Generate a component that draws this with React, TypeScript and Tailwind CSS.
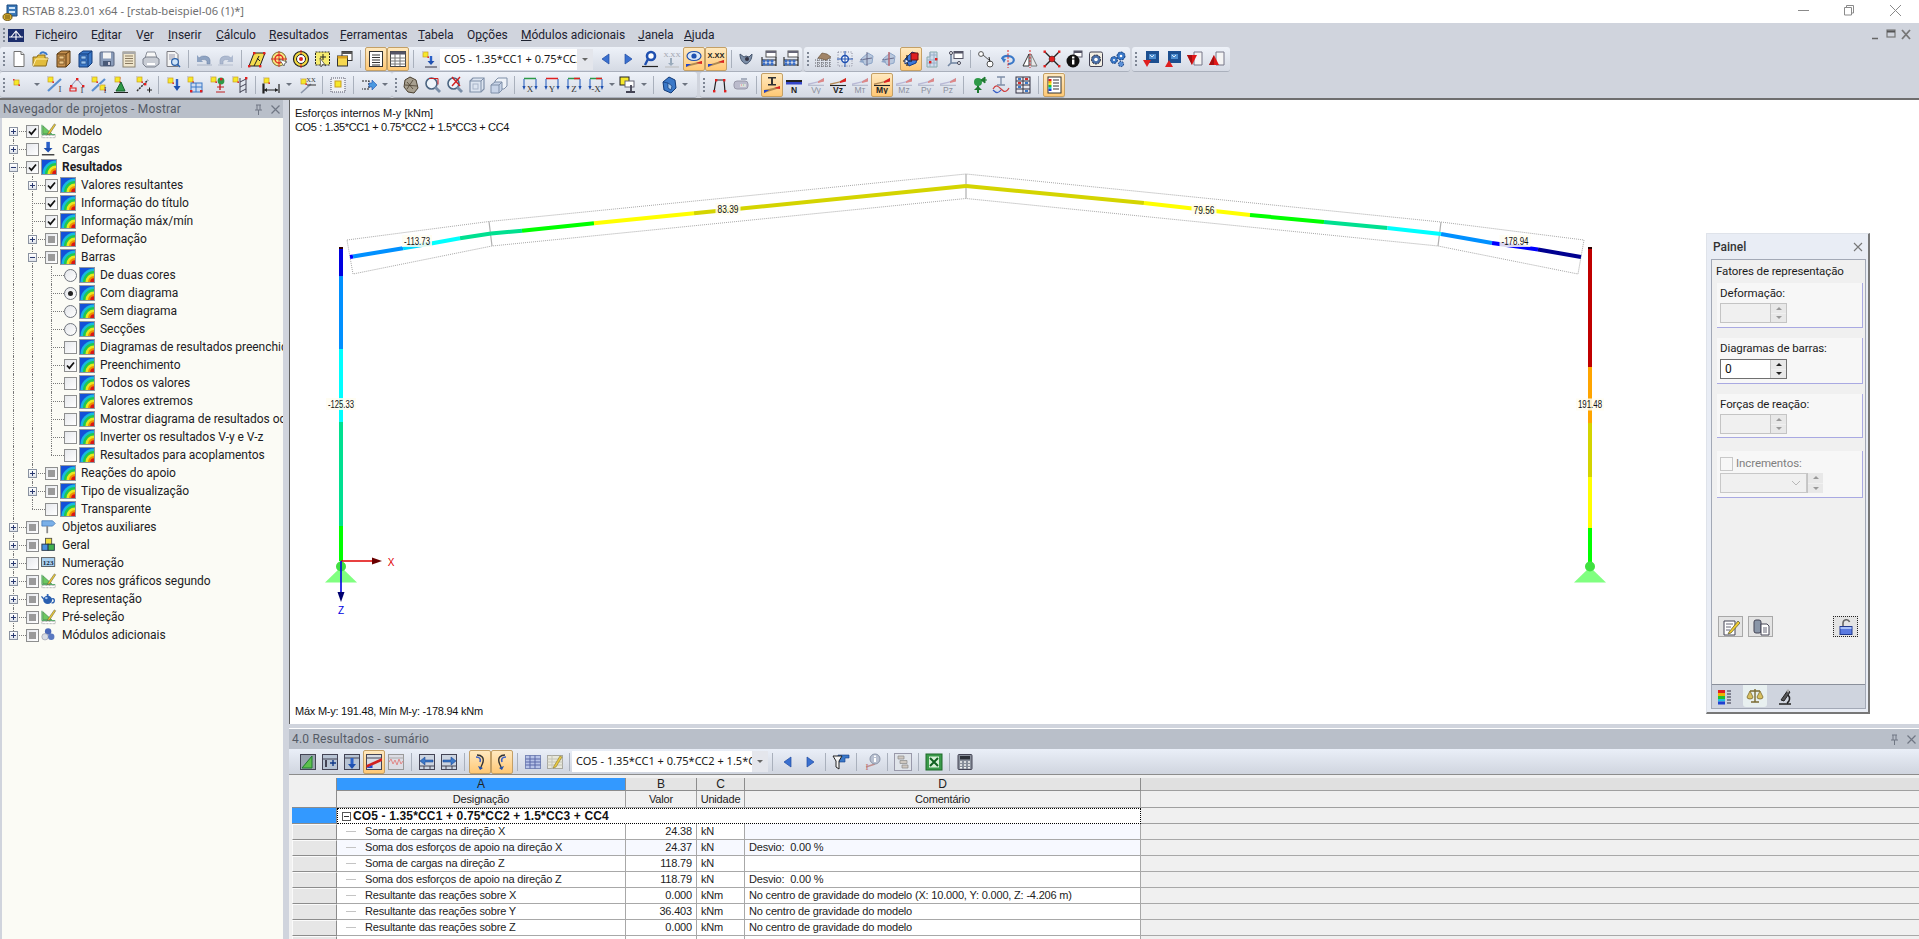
import React from "react";

const Nd = ({ x, y }: { x: number; y: number }) => (
  <g>
    <rect x={x} y={y} width="5" height="5" fill="#f6e82a" stroke="#c9a020" strokeWidth=".7" />
    <rect x={x - 1} y={y - 1} width="1.6" height="1.6" fill="#c8c8d8" />
    <rect x={x + 4.4} y={y + 4.4} width="1.6" height="1.6" fill="#d33" />
  </g>
);
const Rd = ({ x, y }: { x: number; y: number }) => <rect x={x} y={y} width="2.4" height="2.4" fill="#e02020" />;
const Tx = ({ x, y, t, c = "#333", s = 7 }: { x: number; y: number; t: string; c?: string; s?: number }) => (
  <text x={x} y={y} fontSize={s} fill={c} fontFamily="Liberation Serif, serif" textAnchor="middle">{t}</text>
);
const Wedge = ({ dim }: { dim?: boolean }) => (
  <g>
    <path d="M1 9 L17 5 V2 L10 5.5 L1 7.5z" fill={dim ? "#b9b9d6" : "#b48a55"} />
    <path d="M11 5.5L17 2v3.4L11 7z" fill={dim ? "#d88" : "#d22"} />
  </g>
);
const Res = ({ l, dim, bar }: { l: string; dim?: boolean; bar?: boolean }) => (
  <g>
    {bar ? <g><rect x="1" y="4" width="16" height="2" fill="#222" /><rect x="1" y="6" width="16" height="2.5" fill="#3546c8" /></g> : <Wedge dim={dim} />}
    {!bar && !dim && <path d="M1 9.5h16" stroke="#222" strokeWidth="1.1" />}
    {dim && <path d="M1 9.3h16" stroke="#9aa0b8" strokeWidth=".7" />}
    <text x="9" y="17" fontSize="8.5" textAnchor="middle" fontFamily="Liberation Sans, sans-serif" fontWeight={dim ? 400 : 700} fill={dim ? "#8b8f9c" : "#222"}>{l}</text>
  </g>
);
const Axis = ({ l, t, t2 }: { l: string; t: string; t2?: string }) => (
  <g>
    <path d="M3 2.5h12" stroke={t} strokeWidth="1.5" />
    {t2 && <path d="M9 2.5h6" stroke={t2} strokeWidth="1.5" />}
    <path d="M3 3v8" stroke="#3f70c4" strokeWidth="1.2" />
    <path d="M15 3v8" stroke="#3f70c4" strokeWidth="1.2" />
    <path d="M1.4 10l1.6 4 1.6-4zM13.4 10l1.6 4 1.6-4z" fill="#1f50b0" />
    <Tx x={9} y={16} t={l} c="#333" s={9} />
  </g>
);
const Abacus = () => (
  <g>
    <rect x="6" y="1" width="10" height="6" fill="#fff" stroke="#555" />
    <rect x="6" y="1" width="10" height="2" fill="#667" />
    <path d="M2 7v9M16 7v9M2 10h14M2 15h14" stroke="#222" strokeWidth="1.1" fill="none" />
    {[4, 8, 12].map((x) => <g key={x}><circle cx={x} cy="11" r="1.6" fill="#3a6ec8" /><circle cx={x} cy="14" r="1.6" fill="#3a6ec8" /></g>)}
  </g>
);
const Plane = ({ a = "#8ea6c8", b = "#b9c8de", c = "#557" }: { a?: string; b?: string; c?: string }) => (
  <g>
    <path d="M3 9l7-6 5 3-1 7-7 2z" fill={b} stroke={a} />
    <path d="M2 10l12-2M9 2v14" stroke={c} strokeWidth=".8" />
    <path d="M1 12l4-3 1 4z" fill={a} />
  </g>
);
const Page = ({ up }: { up?: boolean }) => (
  <g>
    <path d="M8 2h8v13H8z" fill="#f4f4f4" stroke="#778" />
    <path d={up ? "M6 5l5 10H1z" : "M6 15l5-10H1z"} fill="#e01818" />
    <path d={up ? "M6 5v10H1z" : "M6 15V5H1z"} fill="#a81010" />
  </g>
);
const BlueSq = ({ up }: { up?: boolean }) => (
  <g>
    <rect x="4" y="1" width="13" height="12" fill="#1c4f90" />
    <rect x="7" y="4" width="7" height="5" fill="#4f8fd0" />
    <path d="M8 5l2 2 2-2" stroke="#fff" strokeWidth=".8" fill="none" />
    <path d={up ? "M5 10l4 7H1z" : "M5 17l4-7H1z"} fill="#e02020" />
  </g>
);
const ArrowL = () => <path d="M12 4v10L5 9z" fill="#3a70d0" stroke="#1f4aa0" strokeWidth=".7" />;
const ArrowR = () => <path d="M6 4v10l7-5z" fill="#3a70d0" stroke="#1f4aa0" strokeWidth=".7" />;

const ic: Record<string, React.ReactNode> = {
  new: <g><path d="M4 1.5h7l3 3v12H4z" fill="#fff" stroke="#707070" /><path d="M11 1.5v3h3" fill="#e8e8e8" stroke="#707070" /></g>,
  open: <g><path d="M1 7h4l1-2h7v3h3l-2 8H1z" fill="#e2bc3c" stroke="#8a6a18" /><path d="M1 16l3-7h12" fill="none" stroke="#fff0b0" /><path d="M8 4a4 4 0 0 1 7 1" fill="none" stroke="#3a78c8" strokeWidth="2" /></g>,
  dr: <g><path d="M3 4l4-3h9v12l-4 4H3z" fill="#c89250" stroke="#583810" /><path d="M12 17V4H3M12 4l4-3" fill="none" stroke="#583810" /><rect x="5" y="6" width="5" height="3" fill="#f0c888" stroke="#583810" strokeWidth=".6" /><rect x="5" y="11" width="5" height="3" fill="#f0c888" stroke="#583810" strokeWidth=".6" /></g>,
  drb: <g><path d="M3 4l4-3h9v12l-4 4H3z" fill="#3a78c8" stroke="#123a78" /><path d="M12 17V4H3M12 4l4-3" fill="none" stroke="#123a78" /><rect x="5" y="6" width="5" height="3" fill="#98c4f0" stroke="#123a78" strokeWidth=".6" /><rect x="5" y="11" width="5" height="3" fill="#98c4f0" stroke="#123a78" strokeWidth=".6" /></g>,
  save: <g><rect x="2" y="2" width="14" height="14" rx="1" fill="#8a9cba" stroke="#5a6680" /><rect x="5" y="2.5" width="8" height="6" fill="#f4f4f4" /><rect x="5" y="11" width="8" height="5" fill="#4a5a78" /><rect x="10" y="12" width="2" height="3" fill="#ccd" /></g>,
  notes: <g><rect x="3" y="2" width="12" height="15" fill="#f0e6cc" stroke="#8a8270" /><path d="M5 6h8M5 8.5h8M5 11h8M5 13.5h8" stroke="#8a7a60" /><path d="M3 3h12" stroke="#aaa" strokeWidth="2" /></g>,
  print: <g><path d="M5 2h8l2 6H3z" fill="#f8f8f8" stroke="#8a8f9a" /><path d="M1 9l3-2h10l3 2v5l-4 3H4l-3-3z" fill="#c8ccd4" stroke="#7a808c" /><path d="M5 14h8" stroke="#fff" strokeWidth="2" /></g>,
  prev: <g><path d="M3 1.5h8l3 3v12H3z" fill="#f4f4f4" stroke="#7a7a80" /><path d="M5 5h6M5 7h6M5 9h4" stroke="#99a" /><circle cx="11" cy="12" r="3.4" fill="#cfe4f8" stroke="#2a60a8" strokeWidth="1.2" /><path d="M13 14l3 3" stroke="#2a60a8" strokeWidth="1.6" /></g>,
  undo: <g><path d="M4 8a6 4.5 0 0 1 11 2v4H12v-3a4 2.5 0 0 0-6-1z" fill="#8ea3c2" stroke="#7288aa" strokeWidth=".6" /><path d="M2 5v7h6z" fill="#8ea3c2" /><path d="M2 15h15" stroke="#aab4c6" /></g>,
  redo: <g><path d="M14 8a6 4.5 0 0 0-11 2v4h3v-3a4 2.5 0 0 1 6-1z" fill="#aebad0" stroke="#93a3bd" strokeWidth=".6" /><path d="M16 5v7h-6z" fill="#aebad0" /><path d="M1 15h15" stroke="#b8c0d0" /></g>,
  para: <g><path d="M6 3h11l-5 13H1z" fill="#f4dc50" stroke="#222" /><path d="M6 16l5-10M9 8l3 3" stroke="#222" /><Rd x={5} y={2} /><Rd x={0} y={15} /><Rd x={15} y={2} /><Rd x={11} y={15} /></g>,
  tg1: <g><circle cx="9" cy="9" r="7" fill="#f6e480" stroke="#7a6a30" /><circle cx="9" cy="9" r="4" fill="none" stroke="#e02020" strokeWidth="1.3" /><path d="M9 1v16M1 9h16" stroke="#e02020" strokeWidth=".9" /><path d="M9 9l5 7 1-3 2-1z" fill="#fff" stroke="#333" strokeWidth=".6" /></g>,
  tg2: <g><circle cx="9" cy="9" r="7.5" fill="#f4dc40" stroke="#222" strokeWidth="1.2" /><circle cx="9" cy="9" r="4.5" fill="#fff" stroke="#222" /><circle cx="9" cy="9" r="2" fill="#e02020" /><path d="M9 0v4M9 14v4" stroke="#e02020" /></g>,
  noteP: <g><rect x="1.5" y="2" width="14" height="13" fill="#f6ec70" stroke="#222" strokeDasharray="2 1" /><path d="M9 4v6M6 7h6" stroke="#222" /><path d="M6 8l1 9 2-3 3 2z" fill="#fff" stroke="#333" strokeWidth=".7" /></g>,
  win: <g><rect x="6" y="1.5" width="10" height="9" fill="#fff" stroke="#333" /><rect x="6" y="1.5" width="10" height="2.5" fill="#555" /><rect x="1.5" y="6" width="10" height="10" fill="#f6d850" stroke="#333" /><rect x="1.5" y="6" width="10" height="2.5" fill="#d8a020" /></g>,
  list: <g><rect x="2.5" y="1.5" width="13" height="15" fill="#fff" stroke="#333" /><path d="M5 5h8M5 7.5h8M5 10h8M5 12.5h8M5 15h8" stroke="#333" /></g>,
  tbl: <g><rect x="1.5" y="1.5" width="15" height="15" fill="#fff" stroke="#444" /><rect x="1.5" y="1.5" width="15" height="3" fill="#556" /><path d="M1.5 8h15M1.5 11h15M1.5 14h15M6 4v12M11 4v12" stroke="#777" /></g>,
  load: <g><Nd x={3} y={2} /><path d="M11 6v7" stroke="#2a60c8" strokeWidth="2.4" /><path d="M7.5 11l3.5 4 3.5-4z" fill="#1f50b0" /><path d="M5 17h12" stroke="#334" /></g>,
  aL: <ArrowL />,
  aR: <ArrowR />,
  pin: <g><circle cx="10" cy="6" r="4" fill="#fff" stroke="#1f50b0" strokeWidth="2.6" /><path d="M7 9l-3 6" stroke="#1f50b0" strokeWidth="2.4" /><path d="M1 16.5h16" stroke="#222" strokeWidth="1.2" /></g>,
  xxg: <g><text x="9" y="7" fontSize="7" textAnchor="middle" fill="#a0a4ae" fontFamily="Liberation Serif,serif">X.XX</text><path d="M8 8v7" stroke="#9ab" strokeWidth="2" /><path d="M5 13l3 3 3-3z" fill="#9ab" /><path d="M2 17h14" stroke="#bbb" /></g>,
  eye: <g><ellipse cx="9" cy="6" rx="7" ry="4.5" fill="#dce8f8" stroke="#1f50b0" strokeWidth="1.2" /><circle cx="9" cy="6" r="2.6" fill="#1f50b0" /><path d="M1 17l16-4v-2L1 15z" fill="#b08a50" /><path d="M11 13l6-2v3z" fill="#d22" /><path d="M1 17l5-3H1z" fill="#2244cc" /></g>,
  xxa: <g><text x="9" y="8" fontSize="7.5" fontWeight="700" textAnchor="middle" fill="#222" fontFamily="Liberation Sans,sans-serif">X.XX</text><path d="M1 17l16-5v-2L1 15z" fill="#b08a50" /><path d="M11 12l6-2v3z" fill="#d22" /><path d="M1 17l5-3H1z" fill="#2244cc" /></g>,
  hand: <g><path d="M2 4c0 6 3 9 6 10 3-1 6-4 6-10l-3 3-3-1-2 1z" fill="#7d8fa8" stroke="#47566e" /><circle cx="9" cy="9" r="2" fill="#334" /></g>,
  ab: <Abacus />,
  mesh: <g><path d="M1 10h16M1 13h16M1 16h16M4 8v9M8 8v9M12 8v9M16 8v9" stroke="#5a5a60" strokeDasharray="1 1" /><path d="M4 8l4-5 5 1 4 3-5 3z" fill="#a08468" stroke="#604a30" strokeWidth=".6" /></g>,
  cross: <g><rect x="2" y="2" width="14" height="14" fill="none" stroke="#889" strokeDasharray="1 1.5" /><circle cx="9" cy="9" r="3.4" fill="#fff" stroke="#1f50b0" strokeWidth="1.5" /><path d="M9 1v16M1 9h16" stroke="#1f50b0" /></g>,
  pl1: <Plane />,
  pl2: <g><Plane /><path d="M9 2v14" stroke="#d66" /></g>,
  pl3: <g><path d="M3 9l7-7 6 2-2 9-7 3z" fill="#3b78d8" stroke="#123a88" /><path d="M9 3h7v7H9z" fill="#e02020" stroke="#701010" /><path d="M1 11h9M5 5v11" stroke="#111" strokeWidth="1.1" /><path d="M3 9l4 2-4 3z" fill="#fff" stroke="#123a88" /></g>,
  grid3: <g><path d="M6 2h7v15H3V7h3z" fill="#d0dcec" stroke="#8aa" /><path d="M3 10h10M3 13h10M6 2v15M10 2v15M6 5h7" stroke="#9ab0c8" /><Rd x={5} y={11} /><Rd x={11} y={8} /></g>,
  lwin: <g><rect x="8" y="1.5" width="9" height="7" fill="#fff" stroke="#556" /><rect x="8" y="1.5" width="9" height="2" fill="#556" /><path d="M5 3v10l-3 3" stroke="#7488a4" strokeWidth="1.6" fill="none" /><path d="M5 13h7" stroke="#7488a4" strokeWidth="1.6" /><circle cx="5" cy="3" r="1.5" fill="#fff" stroke="#445" /><circle cx="13" cy="13" r="1.5" fill="#fff" stroke="#445" /></g>,
  rings: <g><circle cx="4" cy="4" r="2.4" fill="#fff" stroke="#555" /><circle cx="13" cy="14" r="3" fill="#fff" stroke="#555" /><path d="M6 5l6 5" stroke="#555" /><path d="M12 7l1 5" stroke="#222" /></g>,
  rot: <g><path d="M3 9a6 4 0 1 1 6 5" fill="none" stroke="#3a78c8" strokeWidth="2.2" /><path d="M2 8l5 1-2 4z" fill="#3a78c8" /><path d="M9 0v18" stroke="#e02020" strokeDasharray="2 1.4" /></g>,
  mir: <g><path d="M8 4L2 16h6z" fill="#fff" stroke="#333" /><path d="M10 4l6 12h-6z" fill="#e8e8e8" stroke="#777" /><path d="M9 0v18" stroke="#e02020" strokeDasharray="2 1.4" /></g>,
  xn: <g><path d="M2 2l14 14M16 2L2 16" stroke="#222" strokeWidth="1.4" /><Rd x={0.5} y={0.5} /><Rd x={15} y={0.5} /><Rd x={0.5} y={15} /><Rd x={15} y={15} /><circle cx="9" cy="9" r="3" fill="#e02020" stroke="#222" strokeWidth=".5" /></g>,
  inf: <g><rect x="9" y="1" width="8" height="6" fill="#fff" stroke="#556" /><rect x="9" y="1" width="8" height="2" fill="#556" /><circle cx="8" cy="11" r="6.5" fill="#111" /><rect x="7" y="9.5" width="2.4" height="5" fill="#fff" /><rect x="7" y="6.5" width="2.4" height="2" fill="#fff" /></g>,
  gear: <g><rect x="2.5" y="2" width="13" height="14.5" rx="1.5" fill="#f4f0e4" stroke="#445" /><circle cx="9" cy="9.5" r="4.5" fill="#4a70a8" stroke="#223" strokeDasharray="2 1" /><circle cx="9" cy="9.5" r="1.8" fill="#fff" /></g>,
  gears: <g><circle cx="12" cy="6" r="4" fill="#3a78c8" stroke="#123a78" strokeDasharray="2 1" /><circle cx="12" cy="6" r="1.3" fill="#fff" /><circle cx="5" cy="10" r="3.4" fill="#3a78c8" stroke="#123a78" strokeDasharray="2 1" /><circle cx="5" cy="10" r="1" fill="#fff" /><circle cx="12" cy="14" r="2.6" fill="#5a90d8" stroke="#123a78" strokeDasharray="1.6 1" /></g>,
  bd: <BlueSq />,
  bu: <BlueSq up />,
  pd: <Page />,
  pu: <Page up />,
  n1: <g><Nd x={4} y={4} /><rect x="3" y="3" width="1.5" height="1.5" fill="#d33" /></g>,
  t1: <g><path d="M2 15L15 3" stroke="#5a90d0" strokeWidth="2.2" /><Nd x={2} y={1} /><Tx x={14} y={16} t="I" s={9} c="#445" /></g>,
  t2: <g><path d="M3 10l6-7 6 7" stroke="#88a" fill="none" /><Rd x={2} y={9} /><Rd x={8} y={2} /><Rd x={14} y={9} /><path d="M2 15h6v-3H2z" fill="none" stroke="#e02020" strokeWidth="1.2" /><Tx x={14} y={17} t="I" s={9} c="#445" /></g>,
  t3: <g><path d="M2 15L15 3" stroke="#5a90d0" strokeWidth="2.2" /><Nd x={2} y={1} /><Nd x={10} y={9} /><Tx x={15} y={17} t="I" s={8} c="#445" /></g>,
  t4: <g><Rd x={6} y={1} /><Nd x={3} y={1} /><path d="M9 6l4 9H4z" fill="#2e9a48" stroke="#17602c" /><path d="M2 16.5h14" stroke="#222" /></g>,
  t5: <g><Nd x={3} y={1} /><path d="M3 15L14 4" stroke="#333" strokeDasharray="2 1" strokeWidth="1.5" /><Rd x={10} y={7} /><path d="M13 14h5M15.5 11.5v5" stroke="#222" /></g>,
  t6: <g><Nd x={3} y={2} /><path d="M12 3v9" stroke="#2a60c8" strokeWidth="2.4" /><path d="M8.5 10l3.5 5 3.5-5z" fill="#1f50b0" /></g>,
  t7: <g><Nd x={1} y={1} /><rect x="4" y="7" width="11" height="9" fill="#cfdcf0" stroke="#3a78c8" /><path d="M4 11h11M9 7v9" stroke="#3a78c8" /><Rd x={3} y={14} /><Rd x={13} y={14} /></g>,
  t8: <g><Nd x={2} y={1} /><circle cx="12" cy="5" r="3.4" fill="#2e9a48" /><Rd x={11} y={2} /><path d="M11 8v6" stroke="#c02020" strokeWidth="1.4" /><path d="M8 11h7M7 16h9" stroke="#c02020" /></g>,
  t9: <g><Nd x={2} y={1} /><path d="M9 2v15M15 2v15M9 6l6-3M9 11l6-3M9 16l6-3" stroke="#445" /><Rd x={14} y={1} /></g>,
  d1: <g><Nd x={2} y={2} /><path d="M1 8h1v9H1zM17 8v9M2 14h14" stroke="#222" strokeWidth="1.2" /><path d="M2 14l3-2v4zM16 14l-3-2v4z" fill="#222" /></g>,
  d2: <g><Nd x={3} y={3} /><path d="M3 17L13 8" stroke="#8a94a8" strokeWidth="1.6" /><text x="13" y="6" fontSize="6.5" textAnchor="middle" fill="#333" fontFamily="Liberation Serif,serif">XX</text><path d="M9 9h9" stroke="#333" /></g>,
  dot: <g><rect x="2" y="2" width="14" height="14" fill="#eef0f4" stroke="#556" strokeDasharray="1 1" /><rect x="6" y="5" width="6" height="6" fill="#f6e82a" stroke="#c9a020" /></g>,
  fr: <g><path d="M2 5h7v8H2" fill="none" stroke="#222" strokeDasharray="2 1" strokeWidth="1.2" /><path d="M9 7h3v-3l5 5-5 5v-3H9z" fill="#4a98e0" stroke="#1f50b0" strokeWidth=".6" /></g>,
  mh: <g><path d="M3 4l5-3 6 3 2 8-4 5-6-1-4-5z" fill="#a8a090" stroke="#4a4030" /><path d="M5 6l6 7M11 4l-6 9M3 9l12 1" stroke="#4a4030" strokeWidth=".8" /></g>,
  m1: <g><circle cx="7.5" cy="7.5" r="5.5" fill="#eef4fa" stroke="#4a6480" strokeWidth="1.6" /><path d="M11 11l5 5" stroke="#7a8ea8" strokeWidth="2.8" /><path d="M5 2.5h9v6" fill="none" stroke="#d02020" /></g>,
  m2: <g><circle cx="7.5" cy="7.5" r="5.5" fill="#eef4fa" stroke="#4a6480" strokeWidth="1.6" /><path d="M11 11l5 5" stroke="#7a8ea8" strokeWidth="2.8" /><path d="M6 1l8 9M14 1l-8 9" stroke="#d02020" strokeWidth="1.4" /></g>,
  c1: <g><path d="M5 2h11v11l-3 3H2V5z" fill="#dce4f0" stroke="#7f8fa8" strokeWidth="1.2" /><path d="M2 5h11v11M13 5l3-3" fill="none" stroke="#7f8fa8" /><rect x="5" y="8" width="5" height="5" fill="none" stroke="#a8b4c8" /></g>,
  c2: <g><path d="M8 2h9v8l-3 3H5V5z" fill="#eef2f8" stroke="#7f8fa8" /><path d="M1 9l4-3h7v8l-3 3H1z" fill="#c8d4e8" stroke="#7f8fa8" /><path d="M1 9h8v8M9 9l3-3" fill="none" stroke="#7f8fa8" /></g>,
  ax: <Axis l="X" t="#2e9a48" />,
  ay: <Axis l="Y" t="#e02020" />,
  az: <Axis l="Z" t="#2e9a48" t2="#e02020" />,
  axn: <Axis l="-X" t="#2e9a48" t2="#e02020" />,
  sc: <g><rect x="1" y="1" width="9" height="8" fill="#f6e82a" stroke="#222" /><rect x="6" y="5" width="9" height="6" fill="#fff" stroke="#667" /><path d="M7 16h9M12 9v7" stroke="#445" strokeWidth="1.8" /></g>,
  shp: <g><path d="M3 6l6-5 6 3 1 8-5 5-7-3z" fill="#3a78c8" stroke="#123a78" /><path d="M8 7l4 3-1 4-3-2zM3 6l5 1" fill="#a8ccf0" stroke="#123a78" strokeWidth=".7" /></g>,
  pi: <g><path d="M4 16L6 4h8l1 12" fill="none" stroke="#222" strokeWidth="1.2" /><Rd x={3} y={14} /><Rd x={14} y={14} /><Rd x={13} y={3} /><Rd x={5} y={3} /></g>,
  pill: <g><rect x="2" y="5" width="14" height="8" rx="3" fill="#bbc" stroke="#99a" /><rect x="8" y="8" width="6" height="3" fill="#ddd" /><path d="M9 3h6" stroke="#a8b0c0" strokeWidth="2" /><path d="M9 9h1" stroke="#e88" /><path d="M11 9h1" stroke="#8c8" /></g>,
  beam: <g><path d="M5 1h8v1.5h-3V8h3v1.5H5V8h3V2.5H5z" fill="#333" /><path d="M1 17l16-5v-1.5L1 14z" fill="#b08a50" /><path d="M11 12l6-2v3z" fill="#d22" /><path d="M1 17l5-3H1z" fill="#2244cc" /></g>,
  N: <Res l="N" bar />,
  Vy: <Res l="Vy" dim />,
  Vz: <Res l="Vz" />,
  Mt: <Res l="Mт" dim />,
  My: <Res l="My" />,
  Mz: <Res l="Mz" dim />,
  Py: <Res l="Py" dim />,
  Pz: <Res l="Pz" dim />,
  up: <g><path d="M8 5v12" stroke="#1e7a30" strokeWidth="2" /><circle cx="8" cy="6" r="4" fill="#2e9a48" /><path d="M4 14l4-4 4 4z" fill="#1e7a30" /><path d="M17 4h-4M11 4l4-3v6z" fill="#1e7a30" stroke="#1e7a30" /></g>,
  sin: <g><path d="M5 1h8M5 9h8M9 1v8" stroke="#7f8fa8" strokeWidth="1.3" /><path d="M1 13c3-5 5-3 8 0s5 4 8-1" fill="none" stroke="#d04040" strokeWidth="1.2" /><path d="M1 14c3 3 5 4 8 0" fill="none" stroke="#3a60c8" strokeWidth="1.2" /></g>,
  rows: <g><rect x="2" y="1" width="14" height="16" fill="#e8e8ee" stroke="#334" /><path d="M2 5h14M2 9h14M2 13h14M9 1v16" stroke="#334" /><path d="M4 3h3M11 7h3M4 11h3M11 15h3" stroke="#3a78c8" strokeWidth="2" /><path d="M11 3h3M4 7h3" stroke="#d03030" strokeWidth="2" /></g>,
  legend: <g><rect x="3" y="1" width="13" height="16" fill="#fff" stroke="#333" /><rect x="3.5" y="3" width="3" height="2" fill="#e02020" /><rect x="3.5" y="5" width="3" height="2" fill="#f0b000" /><rect x="3.5" y="7" width="3" height="2" fill="#f6e82a" /><rect x="3.5" y="9" width="3" height="2" fill="#20c030" /><rect x="3.5" y="11" width="3" height="2" fill="#20c0e0" /><rect x="3.5" y="13" width="3" height="2" fill="#2040d0" /><path d="M8 4h6M8 7h6M8 10h6M8 13h6" stroke="#333" /></g>,
  rTri: <g><rect x="1.5" y="1.5" width="15" height="15" fill="#9aa4b0" stroke="#445" /><path d="M3 15L13 3v12z" fill="#5cc04c" stroke="#1e7a30" /></g>,
  rPlus: <g><rect x="1.5" y="1.5" width="15" height="15" fill="#b8c4d4" stroke="#445" /><path d="M1.5 6h15" stroke="#445" /><path d="M12 7v6M9 10h6" stroke="#123a88" strokeWidth="1.4" /><path d="M5 7v7" stroke="#445" strokeWidth="2" /></g>,
  rDown: <g><rect x="1.5" y="1.5" width="15" height="15" fill="#b8c4d4" stroke="#445" /><path d="M1.5 5h15" stroke="#445" /><path d="M9 5v7" stroke="#2a60c8" strokeWidth="3" /><path d="M5 11l4 5 4-5z" fill="#1f50b0" /></g>,
  rW: <g><rect x="1.5" y="1.5" width="15" height="15" fill="#d8dce4" stroke="#445" /><path d="M1.5 5h15" stroke="#445" /><path d="M1.5 15L17 8v-3L1.5 12z" fill="#d02020" /><path d="M1.5 15l6-3v3z" fill="#2244cc" /></g>,
  rWave: <g><rect x="1.5" y="1.5" width="15" height="15" fill="#dcdce4" stroke="#999" /><path d="M2 9l2-3 2 5 2-4 2 5 2-6 2 5 2-3" fill="none" stroke="#e08888" /><path d="M1.5 5h15" stroke="#aaa" /></g>,
  rL: <g><rect x="1.5" y="1.5" width="15" height="15" fill="#ccd4e0" stroke="#445" /><path d="M1.5 13h15M6 13v4M12 13v4" stroke="#445" /><path d="M15 7H7V4L2 8l5 4V9h8z" fill="#3a78c8" stroke="#123a88" strokeWidth=".5" /></g>,
  rR: <g><rect x="1.5" y="1.5" width="15" height="15" fill="#ccd4e0" stroke="#445" /><path d="M1.5 13h15M6 13v4M12 13v4" stroke="#445" /><path d="M3 7h8V4l5 4-5 4V9H3z" fill="#3a78c8" stroke="#123a88" strokeWidth=".5" /></g>,
  cvL: <g><path d="M6 2c5 0 7 3 6 7s-3 5-2 7" fill="none" stroke="#333" strokeWidth="1.4" /><path d="M5 4c4 0 5 2 4 5" fill="none" stroke="#3a60c8" strokeWidth="1.6" /><path d="M7 13l2 4 3-2z" fill="#1f50b0" /></g>,
  cvR: <g><path d="M12 2c-5 0-7 3-6 7s3 5 2 7" fill="none" stroke="#333" strokeWidth="1.4" /><path d="M13 4c-4 0-5 2-4 5" fill="none" stroke="#3a60c8" strokeWidth="1.6" /><path d="M11 13l-2 4-3-2z" fill="#1f50b0" /></g>,
  tb1: <g><rect x="1.5" y="2.5" width="15" height="13" fill="#b8c4e8" stroke="#7a88b8" /><path d="M1.5 6h15M1.5 9h15M1.5 12h15M6 2.5v13M11 2.5v13" stroke="#5a68a8" /></g>,
  tb2: <g><rect x="1.5" y="2.5" width="15" height="13" fill="#e8e8dc" stroke="#a8a8a0" /><path d="M1.5 6h15M1.5 9h15M1.5 12h15M6 2.5v13" stroke="#c4c4b8" /><path d="M8 13L14 3l2 1-6 10-3 1z" fill="#e8c840" stroke="#8a7a30" strokeWidth=".6" /></g>,
  fil: <g><path d="M6 2h11v3h-4v4H6z" fill="#3a78c8" stroke="#123a88" strokeWidth=".6" /><path d="M1 3h9L7 8v8L4 14V8z" fill="#f4f4f4" stroke="#222" /></g>,
  fi: <g><path d="M3 14l9-3" stroke="#c09090" strokeWidth="1.5" /><Tx x={4} y={17} t="I" s={9} c="#c07070" /><circle cx="12" cy="6" r="5" fill="#b8c0d0" stroke="#8a94a8" /><rect x="11" y="5" width="2" height="4" fill="#fff" /><rect x="11" y="2.5" width="2" height="1.5" fill="#fff" /></g>,
  tree: <g><rect x="0.5" y="0.5" width="17" height="17" fill="#e0e4ea" stroke="#99a" /><path d="M4 3h6v3H4zM6 7.5h7v3H6zM8 12h6v3H8z" fill="#cfc8c0" stroke="#8a8a8a" strokeWidth=".7" /></g>,
  xl: <g><rect x="1" y="1" width="16" height="16" fill="#3a9a4a" stroke="#1e6a2a" /><rect x="4" y="3.5" width="10" height="11" fill="#d8f0d8" /><path d="M5 5l8 8M13 5l-8 8" stroke="#106020" strokeWidth="2" /></g>,
  calc: <g><rect x="2" y="1.5" width="14" height="15" rx="1" fill="#888e9a" stroke="#445" /><rect x="4" y="3" width="10" height="3.4" fill="#2b2f38" /><path d="M4 9h2M8 9h2M12 9h2M4 12h2M8 12h2M12 12h2M4 14.8h2M8 14.8h2M12 14.8h2" stroke="#f4f4f4" strokeWidth="1.6" /></g>,
  ed: <g><path d="M2 3h11v14H2z" fill="#fff" stroke="#445" /><path d="M4 6h7M4 9h5M4 12h4" stroke="#667" /><path d="M7 14l9-11 2 2-9 10-3 1z" fill="#f0cc30" stroke="#553" strokeWidth=".7" /></g>,
  cp: <g><rect x="2" y="2" width="7" height="13" rx="2" fill="#8a96a8" stroke="#445" /><path d="M9 6h6l2 2v9H9z" fill="#fff" stroke="#445" /><path d="M11 10h4M11 12h4M11 14h4" stroke="#667" /></g>,
  lk: <g><path d="M6 9V5a3.4 3.4 0 0 1 6.6-1" fill="none" stroke="#666" strokeWidth="1.6" /><rect x="3" y="8.5" width="12" height="8" fill="#5a7ae0" stroke="#223a90" /><rect x="3.5" y="9" width="11" height="2" fill="#a8c0f8" /></g>,
  tbars: <g><rect x="1" y="2" width="7" height="3" fill="#e02020" /><rect x="1" y="5" width="7" height="3" fill="#f0b000" /><rect x="1" y="8" width="7" height="3" fill="#20c030" /><rect x="1" y="11" width="7" height="2.5" fill="#20c0e0" /><rect x="1" y="13.5" width="7" height="3" fill="#2040d0" /><path d="M10 3h4M10 6h4M10 9h4M10 12h4M10 15h4" stroke="#667" strokeWidth="1.6" /></g>,
  scale: <g><path d="M9 2v13M4 4h10M5 15h8" stroke="#7a6a30" strokeWidth="1.4" /><path d="M1 10l3-6 3 6a3 2 0 0 1-6 0zM11 10l3-6 3 6a3 2 0 0 1-6 0z" fill="#d8c060" stroke="#7a6a30" strokeWidth=".8" /></g>,
  micro: <g><path d="M5 12l7-10 2 2-6 9z" fill="#555" stroke="#222" /><path d="M3 16h12M12 7a5 5 0 0 1-1 8" fill="none" stroke="#222" strokeWidth="1.6" /><circle cx="12" cy="3" r="1.4" fill="#aaa" /></g>,
  ruler: <g><path d="M1 13V2M1 13h15" stroke="#2e9a48" strokeWidth=".9" /><path d="M2 12V3l10 9z" fill="#6cc860" stroke="#2e8038" strokeWidth=".7" /><path d="M8 11L15 1l1.5 1L10 12l-3 1z" fill="#f0cc30" stroke="#554" strokeWidth=".6" /><rect x="1" y="14" width="15" height="2.5" fill="#fff" stroke="#888" strokeWidth=".8" strokeDasharray="1 .6" /></g>,
  down: <g><path d="M8 1v8" stroke="#2a60c8" strokeWidth="4" /><path d="M3 8l5 5 5-5z" fill="#1f50b0" /><path d="M1 15.5h14" stroke="#222" strokeWidth="1.4" /></g>,
  sign: <g><path d="M1 2h12l3 3-3 3H1z" fill="#7ab0e8" stroke="#3a70b0" strokeWidth=".8" /><path d="M7 8v8" stroke="#8a8a8a" strokeWidth="2" /></g>,
  cubes: <g><rect x="5" y="1.5" width="7" height="7" fill="#f0dc40" stroke="#554" /><rect x="1" y="8" width="7" height="7" fill="#4a90e0" stroke="#234" /><rect x="8" y="8" width="7" height="7" fill="#40b050" stroke="#234" /></g>,
  num: <g><rect x="0.5" y="3" width="15" height="10" fill="#a8d0f0" stroke="#333" strokeWidth=".8" /><text x="8" y="11" fontSize="8" textAnchor="middle" fontWeight="700" fill="#123" fontFamily="Liberation Serif,serif">123</text></g>,
  pot: <g><ellipse cx="7.5" cy="10" rx="5" ry="4.6" fill="#2a5fb0" /><circle cx="7.5" cy="4.6" r="1.2" fill="#2a5fb0" /><path d="M12 9c2-1 3 0 3 2s-2 3-3 2M3 9L0.5 6" fill="none" stroke="#2a5fb0" strokeWidth="1.5" /><ellipse cx="6" cy="8" rx="1.6" ry="1.2" fill="#a8c8f0" /></g>,
  mods: <g><circle cx="8" cy="5" r="3.6" fill="#4a68b8" /><circle cx="4.5" cy="11" r="3.6" fill="#d8dce4" stroke="#889" strokeWidth=".6" /><circle cx="11.5" cy="11" r="3.6" fill="#5a78c0" /></g>,
};

const Ic = ({ n, s = 18 }: { n: string; s?: number }) => (
  <svg width={s} height={s} viewBox="0 0 18 18" className="block shrink-0">{ic[n]}</svg>
);

type It = string;
const Grip = () => (
  <div className="w-[8px] h-full flex flex-col items-center justify-center gap-[2px] shrink-0">
    {[0, 1, 2, 3].map((i) => <div key={i} className="w-[2px] h-[2px] bg-[#7e8694]" />)}
  </div>
);
const Sep = () => (
  <div className="w-[9px] h-full flex items-center justify-center shrink-0">
    <div className="w-[1px] h-[18px] bg-[#a9b0bc]" />
  </div>
);
const Dd = ({ w }: { w: string }) => (
  <div className={`${w} h-full flex items-center justify-center shrink-0`}>
    <div className="w-0 h-0 border-l-[3px] border-r-[3px] border-t-[3px] border-l-transparent border-r-transparent border-t-[#6d7480]" />
  </div>
);
const Btn = ({ n, on }: { n: string; on?: boolean }) => (
  <div className={on
    ? "w-[22px] h-[24px] shrink-0 flex items-center justify-center rounded-[2px] border border-[#c4a066] bg-gradient-to-b from-[#ffe9bf] to-[#ffc874]"
    : "w-[22px] h-[24px] shrink-0 flex items-center justify-center"}>
    <Ic n={n} />
  </div>
);
const Items = ({ list }: { list: It[] }) => (
  <>
    {list.map((k, i) => {
      if (k === "|") return <Sep key={i} />;
      if (k === "v") return <Dd key={i} w="w-[14px]" />;
      if (k === "w") return <Dd key={i} w="w-[10px]" />;
      if (k === ":") return <Grip key={i} />;
      const on = k.startsWith("*");
      return <Btn key={i} n={on ? k.slice(1) : k} on={on} />;
    })}
  </>
);
const Combo = ({ w }: { w: string }) => (
  <div className={`${w} h-[21px] bg-white flex items-center pl-[4px] overflow-hidden shrink-0`}>
    <span className="flex-1 min-w-0 overflow-hidden whitespace-nowrap text-[11px] text-[#1a1a1a]" style={{ fontFamily: "'Noto Sans', sans-serif" }}>CO5 - 1.35*CC1 + 0.75*CC2 + 1.5*CC3 + CC4</span>
    <div className="w-[16px] h-full bg-[#e4e6ec] flex items-center justify-center shrink-0">
      <div className="w-0 h-0 border-l-[3px] border-r-[3px] border-t-[3px] border-l-transparent border-r-transparent border-t-[#666]" />
    </div>
  </div>
);
const Seg = ({ w, children }: { w: string; children: React.ReactNode }) => (
  <div className={`${w} h-full flex items-center rounded-[3px] bg-gradient-to-b from-[#eef2f9] to-[#d5dae4] border-b border-[#aab0bc] shrink-0`}>{children}</div>
);

const menu: [string, string, string, string][] = [
  ["Fic", "h", "eiro", "w-[56px]"],
  ["E", "d", "itar", "w-[45px]"],
  ["V", "e", "r", "w-[32px]"],
  ["", "I", "nserir", "w-[48px]"],
  ["", "C", "álculo", "w-[53px]"],
  ["", "R", "esultados", "w-[71px]"],
  ["", "F", "erramentas", "w-[78px]"],
  ["", "T", "abela", "w-[49px]"],
  ["O", "p", "ções", "w-[54px]"],
  ["", "M", "ódulos adicionais", "w-[117px]"],
  ["", "J", "anela", "w-[46px]"],
  ["", "A", "juda", "w-[46px]"],
];

type Row = { t: string; lv: number; ex?: "+" | "-"; cb: "c" | "e" | "i" | "r" | "R"; ic: string; b?: boolean; last?: boolean; first?: boolean };
const rows: Row[] = [
  { t: "Modelo", lv: 0, ex: "+", cb: "c", ic: "ruler", first: true },
  { t: "Cargas", lv: 0, ex: "+", cb: "e", ic: "down" },
  { t: "Resultados", lv: 0, ex: "-", cb: "c", ic: "rb", b: true },
  { t: "Valores resultantes", lv: 1, ex: "+", cb: "c", ic: "rb" },
  { t: "Informação do título", lv: 1, cb: "c", ic: "rb" },
  { t: "Informação máx/mín", lv: 1, cb: "c", ic: "rb" },
  { t: "Deformação", lv: 1, ex: "+", cb: "i", ic: "rb" },
  { t: "Barras", lv: 1, ex: "-", cb: "i", ic: "rb" },
  { t: "De duas cores", lv: 2, cb: "r", ic: "rb" },
  { t: "Com diagrama", lv: 2, cb: "R", ic: "rb" },
  { t: "Sem diagrama", lv: 2, cb: "r", ic: "rb" },
  { t: "Secções", lv: 2, cb: "r", ic: "rb" },
  { t: "Diagramas de resultados preenchidos", lv: 2, cb: "e", ic: "rb" },
  { t: "Preenchimento", lv: 2, cb: "c", ic: "rb" },
  { t: "Todos os valores", lv: 2, cb: "e", ic: "rb" },
  { t: "Valores extremos", lv: 2, cb: "e", ic: "rb" },
  { t: "Mostrar diagrama de resultados ocultos", lv: 2, cb: "e", ic: "rb" },
  { t: "Inverter os resultados V-y e V-z", lv: 2, cb: "e", ic: "rb" },
  { t: "Resultados para acoplamentos", lv: 2, cb: "e", ic: "rb", last: true },
  { t: "Reações do apoio", lv: 1, ex: "+", cb: "i", ic: "rb" },
  { t: "Tipo de visualização", lv: 1, ex: "+", cb: "i", ic: "rb" },
  { t: "Transparente", lv: 1, cb: "e", ic: "rb", last: true },
  { t: "Objetos auxiliares", lv: 0, ex: "+", cb: "i", ic: "sign" },
  { t: "Geral", lv: 0, ex: "+", cb: "i", ic: "cubes" },
  { t: "Numeração", lv: 0, ex: "+", cb: "e", ic: "num" },
  { t: "Cores nos gráficos segundo", lv: 0, ex: "+", cb: "i", ic: "ruler" },
  { t: "Representação", lv: 0, ex: "+", cb: "i", ic: "pot" },
  { t: "Pré-seleção", lv: 0, ex: "+", cb: "i", ic: "ruler" },
  { t: "Módulos adicionais", lv: 0, ex: "+", cb: "i", ic: "mods", last: true },
];

const Rainbow = () => (
  <svg width="16" height="16" viewBox="0 0 16 16" className="block shrink-0 overflow-hidden">
    <rect width="16" height="16" fill="#1450d8" />
    <circle cx="15" cy="15" r="13.5" fill="#18b8e0" />
    <circle cx="15" cy="15" r="11" fill="#20c850" />
    <circle cx="15" cy="15" r="8.5" fill="#e8e820" />
    <circle cx="15" cy="15" r="6" fill="#f09000" />
    <circle cx="15" cy="15" r="3.8" fill="#d81818" />
    <rect x=".5" y=".5" width="15" height="15" fill="none" stroke="#8f96a0" />
  </svg>
);
const Check = ({ k }: { k: Row["cb"] }) => {
  if (k === "r" || k === "R")
    return (
      <div className="w-[13px] h-[13px] rounded-full border border-[#70757e] bg-gradient-to-br from-[#e4e6ea] to-white flex items-center justify-center shrink-0">
        {k === "R" && <div className="w-[5px] h-[5px] rounded-full bg-[#222]" />}
      </div>
    );
  return (
    <div className="w-[13px] h-[13px] border border-[#8e8f8f] bg-gradient-to-br from-[#e6e8ec] to-white flex items-center justify-center shrink-0">
      {k === "c" && (
        <svg width="9" height="9" viewBox="0 0 9 9" className="block"><path d="M1 4.5l2.4 2.6L8 1.5" fill="none" stroke="#111" strokeWidth="1.7" /></svg>
      )}
      {k === "i" && <div className="w-[7px] h-[7px] bg-[#9a9a9a]" />}
    </div>
  );
};
const Guide = () => (
  <div className="w-[19px] h-full shrink-0">
    <div className="ml-[11px] w-0 h-full border-l border-dotted border-[#7a7a7a]" />
  </div>
);
const Conn = ({ r }: { r: Row }) => (
  <div className="relative w-[24px] h-full shrink-0">
    <div className={`absolute left-[11px] w-0 border-l border-dotted border-[#7a7a7a] ${r.first ? "top-[9px] bottom-0" : r.last ? "top-0 h-[9px]" : "top-0 bottom-0"}`} />
    <div className="absolute left-[11px] right-0 top-[9px] h-0 border-t border-dotted border-[#7a7a7a]" />
    {r.ex && (
      <div className="absolute left-[7px] top-[5px] w-[9px] h-[9px] border border-[#8a92a0] bg-gradient-to-b from-white to-[#dfe4ec] flex items-center justify-center">
        <div className="relative w-[5px] h-[1px] bg-[#2a3a70]">
          {r.ex === "+" && <div className="absolute left-[2px] -top-[2px] w-[1px] h-[5px] bg-[#2a3a70]" />}
        </div>
      </div>
    )}
  </div>
);
const TreeRow = ({ r }: { r: Row }) => (
  <div className="flex items-center h-[18px] overflow-hidden whitespace-nowrap">
    {r.lv >= 1 && <Guide />}
    {r.lv >= 2 && <Guide />}
    <Conn r={r} />
    <Check k={r.cb} />
    <div className="w-[2px] shrink-0" />
    <div className="w-[16px] flex justify-center shrink-0">{r.ic === "rb" ? <Rainbow /> : <Ic n={r.ic} s={16} />}</div>
    <span className={`ml-[5px] text-[12px] tracking-[-0.03px] text-[#1c1c24] ${r.b ? "font-bold" : ""}`} style={{ fontFamily: "Roboto, sans-serif" }}>{r.t}</span>
  </div>
);

const SpinBtn = ({ on }: { on?: boolean }) => (
  <div className="w-[16px] h-full flex flex-col gap-[1px] bg-[#f0f0f0] border-l border-[#c4c4c4] shrink-0">
    <div className="flex-1 bg-[#e8e8e8] flex items-center justify-center">
      <div className={`w-0 h-0 border-l-[3px] border-r-[3px] border-b-[3px] border-l-transparent border-r-transparent ${on ? "border-b-[#222]" : "border-b-[#999]"}`} />
    </div>
    <div className="flex-1 bg-[#e8e8e8] flex items-center justify-center">
      <div className={`w-0 h-0 border-l-[3px] border-r-[3px] border-t-[3px] border-l-transparent border-r-transparent ${on ? "border-t-[#222]" : "border-t-[#999]"}`} />
    </div>
  </div>
);
const Spin = ({ on, v }: { on?: boolean; v?: string }) => (
  <div className={`flex w-[67px] h-[20px] border ${on ? "border-[#707070] bg-white" : "border-[#c4c4c4] bg-[#f0f0f0]"}`}>
    <div className="flex-1 pl-[4px] text-[12px] leading-[18px] text-[#111]">{v}</div>
    <SpinBtn on={on} />
  </div>
);
const Grp = ({ h, mt, children }: { h: string; mt: string; children: React.ReactNode }) => (
  <div className={`${h} ${mt} w-[146px] ml-[5px] bg-[#f7f7f7] border-r border-b border-[#a9a9e2] pl-[3px]`}>{children}</div>
);

const Painel = () => (
  <div className="absolute left-[1416px] top-[133px] w-[164px] h-[481px] flex flex-col bg-[#e9edf5] border-t border-l border-[#dfe3ea] border-r-2 border-b-2 border-r-[#777] border-b-[#777] pl-[4px] pr-[2px]" style={{ fontFamily: "Roboto, sans-serif" }}>
    <div className="h-[25px] flex items-center justify-between px-[2px] shrink-0">
      <span className="text-[12px] font-medium text-[#333]">Painel</span>
      <svg width="10" height="10" viewBox="0 0 10 10" className="block mr-[1px]"><path d="M1 1l8 8M9 1L1 9" stroke="#777" strokeWidth="1.1" /></svg>
    </div>
    <div className="flex-1 flex flex-col bg-[#f0f0f0] border border-[#a3a9b6] text-[11.5px] tracking-[-0.1px]">
      <div className="h-[23px] pl-[4px] flex items-center text-[#1c1c1c] shrink-0">Fatores de representação</div>
      <Grp h="h-[45px]" mt="mt-0">
        <div className="h-[20px] leading-[20px] text-[#1c1c1c]">Deformação:</div>
        <Spin />
      </Grp>
      <Grp h="h-[46px]" mt="mt-[10px]">
        <div className="h-[21px] leading-[21px] text-[#1c1c1c]">Diagramas de barras:</div>
        <Spin on v="0" />
      </Grp>
      <Grp h="h-[44px]" mt="mt-[10px]">
        <div className="h-[20px] leading-[20px] text-[#1c1c1c]">Forças de reação:</div>
        <Spin />
      </Grp>
      <Grp h="h-[47px]" mt="mt-[13px]">
        <div className="h-[22px] flex items-center pt-[3px]">
          <div className="w-[13px] h-[14px] border border-[#c8c8c8] bg-[#f7f7f7] mr-[3px]" />
          <span className="text-[#808080]">Incrementos:</span>
        </div>
        <div className="flex h-[20px]">
          <div className="w-[87px] h-full border border-[#c8c8c8] bg-[#f0f0f0] flex items-center justify-end pr-[5px]">
            <svg width="10" height="6" viewBox="0 0 10 6" className="block"><path d="M1 1l4 4 4-4" fill="none" stroke="#b8b8b8" /></svg>
          </div>
          <SpinBtn />
        </div>
      </Grp>
      <div className="flex-1" />
      <div className="flex items-center pl-[6px] pr-[7px] mb-[47px]">
        <div className="w-[25px] h-[21px] bg-[#e4e4e4] border border-[#a8a8a8] flex items-center justify-center"><Ic n="ed" /></div>
        <div className="w-[25px] h-[21px] ml-[5px] bg-[#e4e4e4] border border-[#a8a8a8] flex items-center justify-center"><Ic n="cp" /></div>
        <div className="flex-1" />
        <div className="w-[25px] h-[21px] bg-[#e4e4e4] border border-dotted border-[#222] flex items-center justify-center"><Ic n="lk" /></div>
      </div>
      <div className="h-[24px] bg-[#cfd4de] border-t border-[#8a8f9a] flex items-center pl-[5px] shrink-0">
        <Ic n="tbars" />
        <div className="w-[24px] h-[22px] ml-[8px] -mt-[1px] bg-[#e8f0f0] rounded-b-[3px] flex items-center justify-center"><Ic n="scale" /></div>
        <div className="ml-[9px]"><Ic n="micro" /></div>
      </div>
    </div>
    <div className="h-[3px] shrink-0" />
  </div>
);

const Diagram = () => {
  const segs: [number, number, number, number, string][] = [
    [350, 257, 353, 256.5, "#0000ff"], [353, 256.5, 403, 248.3, "#0090ff"], [403, 248.3, 431, 243.5, "#00d8ff"], [431, 243.5, 460, 238.3, "#00ffff"],
    [460, 238.3, 491, 233.6, "#00e090"], [491, 233.6, 522, 230.7, "#00e090"], [522, 230.7, 594, 223.3, "#00ff00"], [594, 223.3, 694, 213.3, "#ffff00"],
    [694, 213.3, 966, 186, "#d4d400"], [966, 186, 1144, 203, "#d4d400"], [1144, 203, 1250, 215, "#ffff00"], [1250, 215, 1324, 222, "#00ff00"],
    [1324, 222, 1387.5, 228, "#00e090"], [1387.5, 228, 1441, 234, "#00ffff"], [1441, 234, 1492, 243, "#0090ff"], [1492, 243, 1538, 249.5, "#0000ff"], [1538, 249.5, 1581, 257, "#000090"],
  ];
  const cols: [number, number, number, string][] = [
    [341, 249, 276, "#0000e0"], [341, 276, 349, "#0090ff"], [341, 349, 422, "#00ffff"], [341, 422, 526, "#00e090"], [341, 526, 561, "#00ff00"],
    [1590, 249, 367, "#c00000"], [1590, 367, 423, "#ffa500"], [1590, 423, 477, "#d4d400"], [1590, 477, 528, "#ffff00"], [1590, 528, 562, "#00ff00"],
  ];
  const labels: [string, number, number, number][] = [
    ["-113.73", 417, 241, 26], ["83.39", 728, 209, 21], ["79.56", 1204, 210, 21], ["-178.94", 1515, 241, 27], ["-125.33", 341, 404, 26], ["191.48", 1590, 404.5, 24],
  ];
  const dotted = "M347 240L489 221.5L966 174L1441 222L1584 240L1578 274L1438 246L966 198.5L492 246L353 274Z";
  return (
    <svg className="absolute inset-0 block" width="1629" height="624" viewBox="290 100 1629 624">
      <path d={dotted} fill="none" stroke="#a8a8a8" strokeWidth="1" strokeDasharray="1 1" />
      <path d="M489 221.5L492 246M966 174V198.5M1441 222L1438 246" stroke="#b0b0b0" strokeWidth="1.2" fill="none" />
      {segs.map((s, i) => <line key={i} x1={s[0]} y1={s[1]} x2={s[2]} y2={s[3]} stroke={s[4]} strokeWidth="4" />)}
      <rect x="339" y="247" width="4" height="2" fill="#300000" />
      <rect x="1588" y="247" width="4" height="2" fill="#300000" />
      {cols.map((c, i) => <rect key={i} x={c[0] - 2} y={c[1]} width="4" height={c[2] - c[1]} fill={c[3]} />)}
      {[341, 1590].map((x) => (
        <g key={x}>
          <path d={`M${x} 567L${x + 16} 582.5H${x - 16}Z`} fill="#80ff80" />
          <circle cx={x} cy="566.5" r="5" fill="#40e040" />
        </g>
      ))}
      <line x1="341" y1="561" x2="374" y2="561" stroke="#e00000" strokeWidth="1.3" />
      <path d="M372 557.5L382 561L372 564.5Z" fill="#6a0000" />
      <line x1="341" y1="561" x2="341" y2="594" stroke="#0000e0" strokeWidth="1.6" />
      <path d="M337.5 592L341 602L344.5 592Z" fill="#000070" />
      <text x="391" y="566" fontSize="10" fill="#e00000" textAnchor="middle" fontFamily="Liberation Sans, sans-serif">X</text>
      <text x="341" y="614" fontSize="10" fill="#0000e0" textAnchor="middle" fontFamily="Liberation Sans, sans-serif">Z</text>
      {labels.map(([t, x, y, w]) => (
        <g key={t}>
          <rect x={x - w / 2 - 2} y={y - 6} width={w + 4} height="12" fill="#fffdf0" fillOpacity=".85" />
          <text x={x} y={y + 3.5} fontSize="10" fill="#111" textAnchor="middle" textLength={w} lengthAdjust="spacingAndGlyphs" fontFamily="Liberation Sans, sans-serif">{t}</text>
        </g>
      ))}
    </svg>
  );
};

type D = [string, string, string, string, boolean, boolean];
const data: D[] = [
  ["Soma de cargas na direção X", "24.38", "kN", "", false, true],
  ["Soma dos esforços de apoio na direção X", "24.37", "kN", "Desvio:  0.00 %", true, true],
  ["Soma de cargas na direção Z", "118.79", "kN", "", false, false],
  ["Soma dos esforços de apoio na direção Z", "118.79", "kN", "Desvio:  0.00 %", false, false],
  ["Resultante das reações sobre X", "0.000", "kNm", "No centro de gravidade do modelo (X: 10.000, Y: 0.000, Z: -4.206 m)", false, false],
  ["Resultante das reações sobre Y", "36.403", "kNm", "No centro de gravidade do modelo", false, false],
  ["Resultante das reações sobre Z", "0.000", "kNm", "No centro de gravidade do modelo", false, false],
  ["", "", "", "", false, false],
];

const Head = ({ w, t, on }: { w: string; t: string; on?: boolean }) => (
  <div className={`${w} h-full shrink-0 flex items-center justify-center border-r border-b border-[#8c8c8c] text-[12px] ${on ? "bg-[#3399ff] text-[#222]" : "bg-[#e4e4e4] text-[#222]"}`}>{t}</div>
);
const Sub = ({ w, t }: { w: string; t: string }) => (
  <div className={`${w} h-full shrink-0 flex items-center justify-center border-r border-b border-[#a0a0a0] text-[11px] tracking-[-0.18px] text-[#222]`}>{t}</div>
);

const Tabela = () => (
  <div className="flex-1 overflow-hidden bg-[#f0f0f0] border-t border-[#8c8c8c] pt-[3px] pl-[3px]" style={{ fontFamily: "'Liberation Sans', sans-serif" }}>
    <div className="flex h-[13px]">
      <div className="w-[45px] shrink-0 border-r border-[#8c8c8c]" />
      <Head w="w-[289px]" t="A" on />
      <Head w="w-[71px]" t="B" />
      <Head w="w-[48px]" t="C" />
      <Head w="w-[396px]" t="D" />
      <div className="flex-1 bg-[#e0e0e0] border-b border-[#a0a0a0]" />
    </div>
    <div className="flex h-[17px] bg-[#f0f0f0]">
      <div className="w-[45px] shrink-0 border-r border-b border-[#8c8c8c]" />
      <Sub w="w-[289px]" t="Designação" />
      <Sub w="w-[71px]" t="Valor" />
      <Sub w="w-[48px]" t="Unidade" />
      <Sub w="w-[396px]" t="Comentário" />
      <div className="flex-1 border-b border-[#a0a0a0]" />
    </div>
    <div className="flex h-[16px]">
      <div className="w-[45px] shrink-0 bg-[#3399ff] border-r border-b border-[#8c8c8c]" />
      <div className="w-[804px] shrink-0 bg-white border border-dotted border-black flex items-center pl-[4px] text-[12px] tracking-[0.15px] font-bold text-[#111] whitespace-nowrap">
        <div className="w-[9px] h-[9px] border border-[#555] mr-[2px] flex items-center justify-center shrink-0"><div className="w-[5px] h-[1px] bg-[#333]" /></div>
        CO5 - 1.35*CC1 + 0.75*CC2 + 1.5*CC3 + CC4
      </div>
      <div className="flex-1 border-b border-[#a0a0a0]" />
    </div>
    {data.map((r, i) => (
      <div key={i} className="flex h-[16px] text-[11px] tracking-[-0.18px] text-[#222]">
        <div className="w-[45px] shrink-0 bg-[#e6e6e6] border border-[#fafafa] border-r-[#8c8c8c] border-b-[#8c8c8c]" />
        <div className={`w-[289px] shrink-0 flex items-center border-r border-b border-[#a8a8a8] ${r[4] ? "bg-[#f7f9ff]" : "bg-white"}`}>
          <div className="w-[10px] h-[1px] bg-[#c4c4c4] ml-[9px] mr-[9px] shrink-0" />
          <span className="whitespace-nowrap">{r[0]}</span>
        </div>
        <div className={`w-[71px] shrink-0 flex items-center justify-end pr-[4px] border-r border-b border-[#a8a8a8] ${r[4] ? "bg-[#f7f9ff]" : "bg-white"}`}>{r[1]}</div>
        <div className={`w-[48px] shrink-0 flex items-center pl-[4px] border-r border-b border-[#a8a8a8] ${r[4] ? "bg-[#f7f9ff]" : "bg-white"}`}>{r[2]}</div>
        <div className={`w-[396px] shrink-0 flex items-center pl-[4px] border-r border-b border-[#a8a8a8] whitespace-pre ${r[5] ? "bg-[#f7f9ff]" : "bg-white"}`}>{r[3]}</div>
        <div className="flex-1 border-b border-[#a8a8a8]" />
      </div>
    ))}
  </div>
);

const tb1a: It[] = [":", "new", "open", "dr", "drb", "save", "notes", "print", "prev", "|", "undo", "redo", "|", "para", "tg1", "tg2", "noteP", "win", "|", "*list", "*tbl", "|", "load"];
const tb1b: It[] = ["aL", "aR", "pin", "xxg", "*eye", "*xxa", "|", "hand", "ab", "ab"];
const tb1c: It[] = [":", "mesh", "cross", "pl1", "pl2", "*pl3", "grid3", "lwin", "|", "rings", "rot", "mir", "xn", "inf", "gear", "gears"];
const tb1d: It[] = [":", "bd", "bu", "pd", "pu"];
const tb2a: It[] = [":", "n1", "v", "t1", "t2", "t3", "t4", "t5", "|", "t6", "t7", "t8", "t9", "|", "d1", "v", "d2", "|", "dot", "|", "fr", "w"];
const tb2b: It[] = [":", "mh", "m1", "m2", "c1", "c2", "|", "ax", "ay", "az", "axn", "w", "sc", "w", "|", "shp", "w"];
const tb2c: It[] = [":", "pi", "pill", "|", "*beam", "N", "Vy", "Vz", "Mt", "*My", "Mz", "Py", "Pz", "|", "up", "sin", "rows", "|", "*legend"];
const tb3a: It[] = ["rTri", "rPlus", "rDown", "*rW", "rWave", "|", "rL", "rR", "|", "*cvL", "*cvR", "|", "tb1", "tb2"];
const tb3b: It[] = ["|", "aL", "aR", "|", "fil", "|", "fi", "|", "tree", "|", "xl", "|", "calc"];

const PinX = () => (
  <div className="flex items-center gap-[8px]">
    <svg width="9" height="11" viewBox="0 0 9 11" className="block"><path d="M2 1h5M3 1v5M6 1v5M1 6h7M4.5 6v5" stroke="#707784" fill="none" /></svg>
    <svg width="9" height="9" viewBox="0 0 9 9" className="block"><path d="M.5.5l8 8M8.5.5l-8 8" stroke="#707784" strokeWidth="1.2" /></svg>
  </div>
);

export default function App() {
  return (
    <div className="w-[1919px] h-[939px] overflow-hidden flex flex-col bg-[#d0d4dd]" style={{ fontFamily: "'Noto Sans', sans-serif" }}>
      <div className="h-[23px] bg-white flex items-center shrink-0">
        <svg width="18" height="18" viewBox="0 0 18 18" className="block ml-[2px]">
          <path d="M5 2h10v11H5z" fill="#3a78b8" stroke="#1c4a80" />
          <path d="M7 4h6v2H7zM7 8h6v2H7z" fill="#cfe4f8" />
          <ellipse cx="5.5" cy="14" rx="4.5" ry="3.4" fill="#d8b030" stroke="#6a5010" />
          <path d="M3 13h5M3 15h5" stroke="#6a5010" />
        </svg>
        <span className="ml-[2px] text-[11.2px] text-[#707070] whitespace-nowrap">RSTAB 8.23.01 x64 - [rstab-beispiel-06 (1)*]</span>
        <div className="flex-1" />
        <svg width="121" height="23" viewBox="0 0 121 23" className="block shrink-0">
          <path d="M0 10.5h11" stroke="#8a8a8a" />
          <path d="M46.5 7.5h7v7.5h-7zM48.5 7.5V5.5h7v7.5h-2" fill="none" stroke="#8a8a8a" />
          <path d="M92 5l11 11M103 5L92 16" stroke="#8a8a8a" />
        </svg>
      </div>

      <div className="h-[24px] flex items-center shrink-0 text-[12px] text-[#1d2230]" style={{ fontFamily: "Roboto, sans-serif" }}>
        <Grip />
        <svg width="16" height="13" viewBox="0 0 16 13" className="block mr-[11px]">
          <rect width="16" height="13" fill="#1c2e6c" />
          <path d="M1 8h14M3 8l5-6 5 6M8 2v9" fill="none" stroke="#fff" strokeWidth="1.1" />
        </svg>
        {menu.map(([a, u, b, w], i) => (
          <div key={i} className={`${w} shrink-0 whitespace-nowrap`}>
            {a}<span className="underline">{u}</span>{b}
          </div>
        ))}
        <div className="flex-1" />
        <svg width="44" height="14" viewBox="0 0 44 14" className="block mr-[3px] shrink-0">
          <path d="M0 10.5h6" stroke="#666" strokeWidth="1.5" />
          <rect x="15" y="2" width="8" height="7" fill="none" stroke="#777" strokeWidth="1.2" />
          <path d="M15 3.5h8" stroke="#555" strokeWidth="2" />
          <path d="M30 2l8 9M38 2l-8 9" stroke="#777" strokeWidth="1.8" />
        </svg>
      </div>

      <div className="h-[25px] flex items-center shrink-0">
        <Seg w="w-[802px]">
          <Items list={tb1a} />
          <Combo w="w-[153px]" />
          <div className="w-[2px]" />
          <Items list={tb1b} />
        </Seg>
        <div className="w-[2px]" />
        <Seg w="w-[326px]"><Items list={tb1c} /></Seg>
        <div className="w-[2px]" />
        <Seg w="w-[98px]"><Items list={tb1d} /></Seg>
      </div>

      <div className="h-[26px] flex items-center shrink-0">
        <Seg w="w-[392px]"><Items list={tb2a} /></Seg>
        <Seg w="w-[305px]"><Items list={tb2b} /></Seg>
        <div className="w-[3px]" />
        <Seg w="w-[365px]"><Items list={tb2c} /></Seg>
      </div>

      <div className="h-[2px] bg-[#6e6e6e] shrink-0" />

      <div className="flex-1 flex min-h-0">
        <div className="w-[289px] flex flex-col shrink-0 pr-[6px]">
          <div className="h-[18px] bg-[#b9bfc9] flex items-center justify-between pl-[3px] pr-[3px] shrink-0">
            <span className="text-[12px] text-[#555b66]" style={{ fontFamily: "Roboto, sans-serif", letterSpacing: "0.2px" }}>Navegador de projetos - Mostrar</span>
            <PinX />
          </div>
          <div className="flex-1 ml-[2px] bg-[#fbfbf5] pt-[4px] overflow-hidden">
            {rows.map((r) => <TreeRow key={r.t} r={r} />)}
          </div>
        </div>

        <div className="flex-1 flex flex-col min-w-0">
          <div className="h-[624px] relative bg-white border-l border-[#606060] shrink-0">
            <Diagram />
            <div className="relative h-full flex flex-col justify-between pl-[5px] pt-[6px] pb-[6px] text-[11px] leading-[14px] text-[#111]" style={{ fontFamily: "'Liberation Sans', sans-serif" }}>
              <div>
                <div>Esforços internos M-y [kNm]</div>
                <div className="tracking-[-0.35px]">CO5 : 1.35*CC1 + 0.75*CC2 + 1.5*CC3 + CC4</div>
              </div>
              <div className="tracking-[-0.24px]">Máx M-y: 191.48, Mín M-y: -178.94 kNm</div>
            </div>
            <Painel />
          </div>
          <div className="h-[5px] bg-[#d0d4dd] border-b border-white shrink-0" />
          <div className="flex-1 flex flex-col min-h-0">
            <div className="h-[20px] bg-[#b9bfc9] flex items-center justify-between pl-[3px] pr-[3px] shrink-0">
              <span className="text-[12px] text-[#555b66]" style={{ fontFamily: "Roboto, sans-serif", letterSpacing: "0.2px" }}>4.0 Resultados - sumário</span>
              <PinX />
            </div>
            <div className="h-[25px] flex items-center pl-[8px] bg-gradient-to-b from-[#eaeff8] to-[#d0d5df] shrink-0">
              <Items list={tb3a} />
              <div className="w-[6px] h-full flex items-center justify-center shrink-0"><div className="w-[1px] h-[18px] bg-[#a9b0bc]" /></div>
              <Combo w="w-[196px]" />
              <Items list={tb3b} />
            </div>
            <Tabela />
          </div>
        </div>
      </div>
    </div>
  );
}
